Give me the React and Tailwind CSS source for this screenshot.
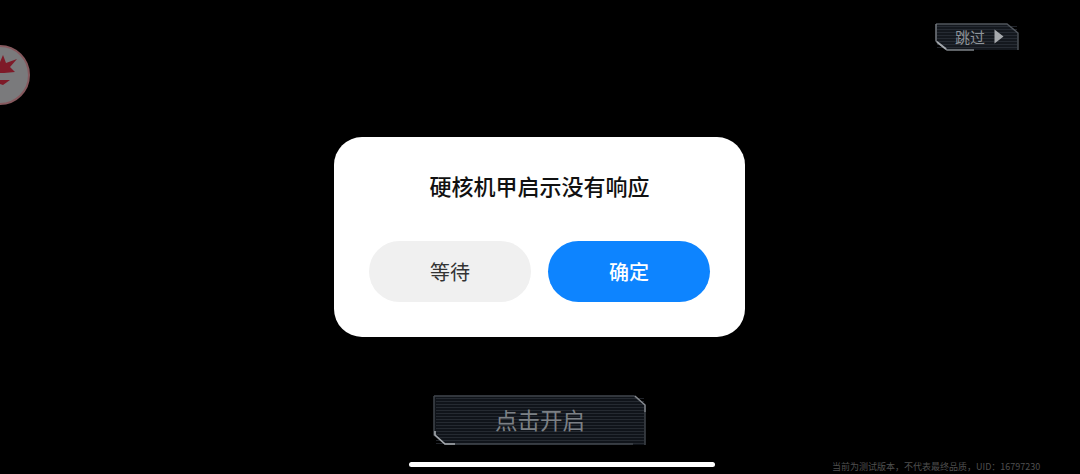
const cjk = { fontFamily: '"Noto Sans CJK SC", "Noto Sans", sans-serif' };

function Scanlines({ w, h }) {
  const ys = [];
  for (let y = 4; y < h - 2; y += 3) ys.push(y);
  return (
    <g>
      {ys.map((y) => (
        <line key={y} x1="3" x2={w - 3} y1={y + 0.5} y2={y + 0.5} stroke="#2f343c" strokeWidth="1" opacity="0.7" />
      ))}
    </g>
  );
}

function SkipButton() {
  const w = 86, h = 30;
  return (
    <div className="absolute left-[934px] top-[22px] w-[86px] h-[30px] flex items-center" style={cjk}>
      <svg className="absolute inset-0" width={w} height={h} viewBox={`0 0 ${w} ${h}`}>
        <path d="M2 2 H73 L84 11 V28 H13 L2 19 Z" fill="#14181e" />
        <Scanlines w={w} h={h} />
        <path d="M2 2 H73 L84 11 V28" fill="none" stroke="#50555c" strokeWidth="1.4" />
        <path d="M2 2 V19 L13 28 H40" fill="none" stroke="#7d8288" strokeWidth="1.4" />
        <path d="M3 20 L12 27" stroke="#a3a7ac" strokeWidth="1.8" />
      </svg>
      <span className="relative ml-[21px] -mt-[1px] text-[15px] leading-none text-[#8f9499]">跳过</span>
      <svg className="relative ml-[9px] -mt-[1px]" width="10" height="15" viewBox="0 0 10 15">
        <path d="M0.5 0.5 L9.5 7.5 L0.5 14.5 Z" fill="#a7aaae" />
      </svg>
    </div>
  );
}

function StartButton() {
  const w = 214, h = 52;
  return (
    <div className="absolute left-[433px] top-[394px] w-[214px] h-[52px] flex items-center justify-center" style={cjk}>
      <svg className="absolute inset-0" width={w} height={h} viewBox={`0 0 ${w} ${h}`}>
        <path d="M1 1.5 H201 L212 10 V51 H12 L1 41 Z" fill="#10141a" />
        <Scanlines w={w} h={h} />
        <path d="M1 2 H201 L212 11 V51" fill="none" stroke="#3f444b" strokeWidth="1.5" />
        <path d="M1 2 V41 L12 50 H200" fill="none" stroke="#3f444b" strokeWidth="1.5" />
        <path d="M202 2 L212 11 V18" fill="none" stroke="#8a8e93" strokeWidth="1.2" />
        <path d="M2 37 V41 L12 50 H22" fill="none" stroke="#a6aaae" strokeWidth="1.6" />
      </svg>
      <span className="relative text-[22.5px] leading-none text-[#7c8085] -mt-[1px]">点击开启</span>
    </div>
  );
}

function Emblem() {
  return (
    <svg className="absolute left-0 top-[44px]" width="32" height="62" viewBox="0 0 32 62">
      <circle cx="0" cy="31" r="29" fill="#7a7a7c" stroke="#86595e" strokeWidth="2" />
      <path d="M0 18 L3 11 L6 19 L17 15 L10 23 L15 28 L4 29 L0 29 Z" fill="#7e1a28" />
      <path d="M0 36 L10 36 L3 41 L0 40 Z" fill="#7e1a28" />
    </svg>
  );
}

export default function App() {
  return (
    <div className="relative w-[1080px] h-[474px] overflow-hidden bg-black flex items-start justify-center" style={cjk}>
      <Emblem />
      <SkipButton />
      <StartButton />

      <div className="mt-[137px] -ml-[1px] w-[411px] h-[200px] bg-white rounded-[28px] flex flex-col items-center">
        <div className="mt-[33px] h-[30px] text-[22px] leading-[30px] font-medium text-[#111111] whitespace-nowrap">硬核机甲启示没有响应</div>
        <div className="mt-[41px] flex gap-[17px]">
          <div className="w-[162px] h-[61px] rounded-full bg-[#f0f0f0] flex items-center justify-center text-[20px] text-[#333333]">等待</div>
          <div className="w-[162px] h-[61px] rounded-full bg-[#0d84ff] flex items-center justify-center text-[20px] font-medium text-white">确定</div>
        </div>
      </div>

      <div className="absolute left-[409px] top-[462px] w-[306px] h-[5px] rounded-full bg-white" />
      <div className="absolute left-[832px] top-[460px] text-[9px] leading-[13px] text-[#4f4f4f] whitespace-nowrap">当前为测试版本，不代表最终品质，UID：16797230</div>
    </div>
  );
}
